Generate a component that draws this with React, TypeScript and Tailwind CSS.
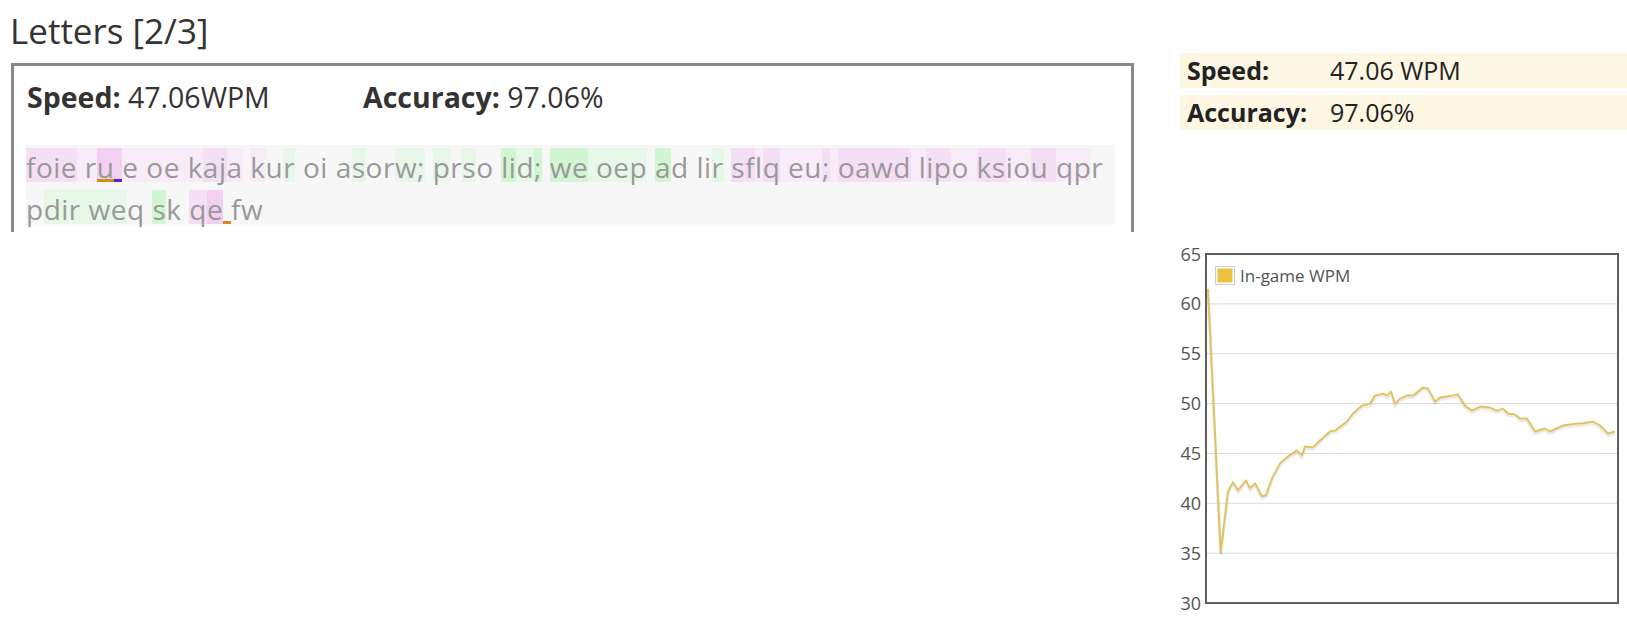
import React from 'react'

const FONT = { fontFamily: '"Open Sans", "Noto Sans", sans-serif' }

// colour codes for the typed text highlight
const BG: Record<string, string> = {
  a: 'bg-[#f5dff5]',
  b: 'bg-[#f9ecf9]',
  c: 'bg-[#f1d0f1]',
  g: 'bg-[#e8f8e8]',
  G: 'bg-[#d2f5d2]',
  n: '',
}

type Line = { text: string; pattern: string; marks: Record<number, string> }

const lines: Line[] = [
  {
    text: 'foie ru e oe kaja kur oi asorw; prso lid; we oep ad lir sflq eu; oawd lipo ksiou qpr',
    pattern: 'aaaab' + 'bcc' + 'bbbbb' + 'baabn' + 'bngn' + 'nnn' + 'ngnnggn' + 'gngnn' + 'GGgGn' + 'GGg' + 'gggn' + 'Gnn' + 'nngn' + 'aabab' + 'bbab' + 'aaaab' + 'baabb' + 'aabba' + 'abb',
    marks: { 6: 'border-[#d98a1a]', 7: 'border-[#5a22d4]' },
  },
  {
    text: 'pdir weq sk qe fw',
    pattern: 'nggggggnnGnnacnnn',
    marks: { 14: 'border-[#d98a1a]' },
  },
]

const wpm: [number, number][] = [
  [1208, 61.5], [1220.7, 35], [1228, 41.2], [1233, 42.1], [1238, 41.3], [1246, 42.3], [1250, 41.5],
  [1255, 42], [1262, 40.7], [1266, 40.8], [1272, 42.5], [1280, 44], [1288, 44.7], [1297, 45.3],
  [1302, 44.8], [1305, 45.7], [1313, 45.6], [1320, 46.3], [1330, 47.2], [1335, 47.3], [1347, 48.2],
  [1353, 49.0], [1362, 49.8], [1370, 50], [1375, 50.8], [1383, 51], [1387, 50.8], [1391, 51.2],
  [1395, 50], [1400, 50.5], [1407, 50.8], [1413, 50.8], [1423, 51.6], [1428, 51.5], [1435, 50.2],
  [1440, 50.6], [1447, 50.7], [1453, 50.8], [1458, 50.9], [1465, 49.8], [1472, 49.3], [1480, 49.7],
  [1490, 49.6], [1497, 49.3], [1503, 49.5], [1508, 49.0], [1515, 48.9], [1520, 48.5], [1527, 48.5],
  [1535, 47.2], [1545, 47.5], [1550, 47.2], [1563, 47.8], [1577, 48.0], [1582, 48.0], [1587, 48.1],
  [1593, 48.2], [1600, 47.8], [1608, 47.0], [1615, 47.2],
]

const PLOT = { left: 26, top: 15, right: 438, bottom: 364 }
const yOf = (v: number) => PLOT.top + ((65 - v) * (PLOT.bottom - PLOT.top)) / 35

const TypedText: React.FC = () => (
  <div className="mt-[32px] w-[1089px] h-[80px] bg-[#f7f7f7] pt-[3px] text-[28px] tracking-[0.5px] text-[#999]">
    {lines.map((l, li) => (
      <div key={li} className={`flex ${li > 0 ? 'mt-[8px]' : ''}`}>
        {l.text.split('').map((ch, i) => (
          <span
            key={i}
            className={`inline-block h-[34px] leading-[38px] whitespace-pre ${BG[l.pattern[i] ?? 'n']} ${l.marks[i] ? `border-b-[3px] ${l.marks[i]}` : ''}`}
          >
            {ch}
          </span>
        ))}
      </div>
    ))}
  </div>
)

const Chart: React.FC = () => {
  const pts = wpm.map(([x, v]) => `${(x - 1180).toFixed(1)},${yOf(v).toFixed(1)}`).join(' ')
  const ticks = [65, 60, 55, 50, 45, 40, 35, 30]
  return (
    <svg width={447} height={380} className="block" style={FONT}>
      {ticks.slice(1, -1).map((t) => (
        <line key={t} x1={PLOT.left} x2={PLOT.right} y1={yOf(t)} y2={yOf(t)} stroke="#dcdcdc" strokeWidth={1} />
      ))}
      {ticks.map((t) => (
        <text key={t} x={21} y={yOf(t) + 6.5} textAnchor="end" fontSize={18} fill="#545454">
          {t}
        </text>
      ))}
      <polyline points={pts} fill="none" stroke="rgba(0,0,0,0.08)" strokeWidth={3} transform="translate(0,2)" />
      <polyline points={pts} fill="none" stroke="#e2c364" strokeWidth={2} strokeLinejoin="round" />
      <rect x={PLOT.left} y={PLOT.top} width={PLOT.right - PLOT.left} height={PLOT.bottom - PLOT.top} fill="none" stroke="#5e5e5e" strokeWidth={2} />
      <rect x={35.5} y={27.5} width={19} height={18} fill="#fff" stroke="#ccc" strokeWidth={1} />
      <rect x={37.5} y={29.5} width={15} height={14} fill="#edc240" />
      <text x={60} y={42.5} fontSize={17} fill="#545454">
        In-game WPM
      </text>
    </svg>
  )
}

export default function App() {
  return (
    <div className="w-[1627px] h-[619px] bg-white flex overflow-hidden" style={FONT}>
      <div className="w-[1180px] pl-[10px] pt-[9px]">
        <div className="text-[35px] leading-[44px] text-[#333]">Letters [2/3]</div>
        <div className="mt-[10px] ml-[1px] w-[1123px] h-[169px] border-[3px] border-b-0 border-[#888] pl-[12px]">
          <div className="flex pt-[15px] pl-[1px] text-[28.5px] leading-[32px] text-[#333]">
            <div className="w-[336px]">
              <span className="font-bold">Speed:</span> 47.06WPM
            </div>
            <div>
              <span className="font-bold">Accuracy:</span> 97.06%
            </div>
          </div>
          <TypedText />
        </div>
      </div>
      <div className="w-[447px] pt-[53px] flex flex-col">
        <div className="flex flex-col gap-[7px] text-[25px] text-[#222]">
          <div className="flex h-[35px] items-center bg-[#fdf6e3] pl-[7px]">
            <div className="w-[143px] font-bold">Speed:</div>
            <div>47.06 WPM</div>
          </div>
          <div className="flex h-[35px] items-center bg-[#fdf6e3] pl-[7px]">
            <div className="w-[143px] font-bold">Accuracy:</div>
            <div>97.06%</div>
          </div>
        </div>
        <div className="mt-[109px]">
          <Chart />
        </div>
      </div>
    </div>
  )
}
